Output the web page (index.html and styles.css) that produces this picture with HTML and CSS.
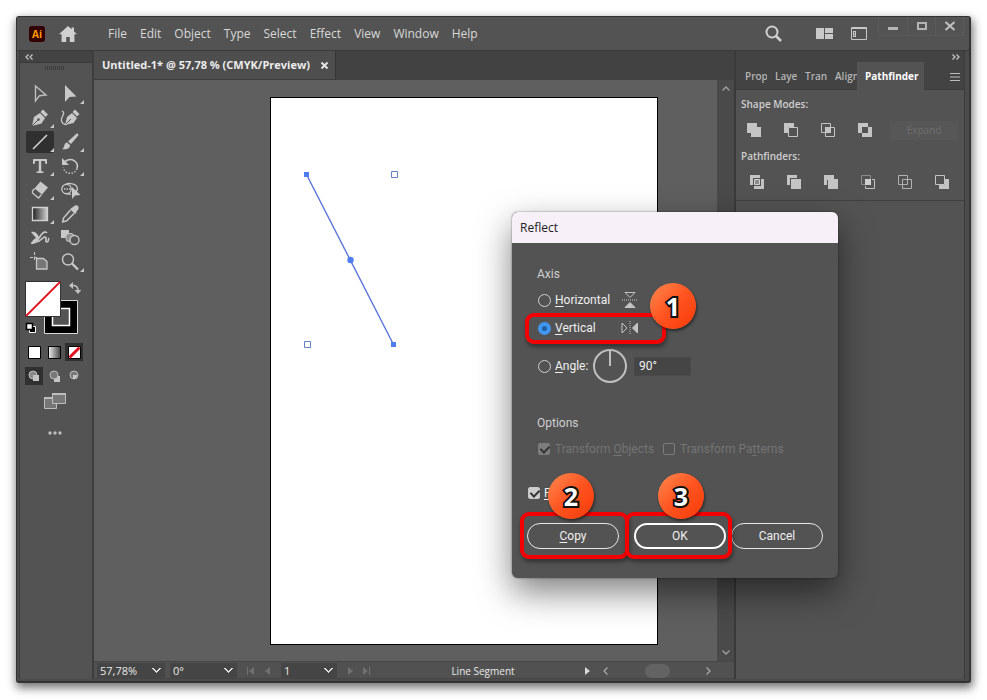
FILE: index.html
```html
<!DOCTYPE html>
<html lang="en">
<head>
<meta charset="utf-8">
<title>Untitled-1* – Reflect</title>
<link rel="stylesheet" href="styles.css">
</head>
<body>
<main class="app">
  <header class="menubar">
    <span class="logo">Ai</span>
    <button class="icon-btn home" aria-label="Home"><svg width="18" height="16" viewBox="0 0 18 16"><path fill="#d0d0d0" d="M9 0L0 8.3h2.6V16h4.6v-5h3.6v5h4.6V8.3H18L15 5.5V1.500h-2.400v1.800z"/></svg></button>
    <nav class="menus">
      <a href="#">File</a><a href="#">Edit</a><a href="#">Object</a><a href="#">Type</a><a href="#">Select</a><a href="#">Effect</a><a href="#">View</a><a href="#">Window</a><a href="#">Help</a>
    </nav>
    <div class="bar-tools">
      <button class="icon-btn" aria-label="Search"><svg width="17" height="17" viewBox="0 0 17 17" fill="none" stroke="#cfcfcf"><circle cx="7" cy="7" r="5.500" stroke-width="2"/><path d="M11 11l5 5" stroke-width="2.600"/></svg></button>
      <button class="icon-btn layout" aria-label="Arrange documents"><svg width="17" height="11" viewBox="0 0 17 11" fill="#c8c8c8"><path d="M0 0h8v11H0zM9 0h8v5H9zM9 6h8v5H9z"/></svg></button>
      <button class="icon-btn" aria-label="Workspace"><svg width="16" height="13" viewBox="0 0 16 13" fill="none" stroke="#c8c8c8"><path d="M.5.5h15v12H.5zM0 1.500h16"/><path d="M2.500 4v6M4.500 4v6M2 4.500h3M2 7h3M2 9.500h3"/></svg></button>
    </div>
    <div class="win-ctrls">
      <button aria-label="Minimize"><svg width="12" height="12" viewBox="0 0 12 12"><path fill="#b4b4b4" d="M1 7h10v3H1z"/></svg></button>
      <button aria-label="Maximize"><svg width="12" height="12" viewBox="0 0 12 12"><path fill="none" stroke="#b4b4b4" stroke-width="2" d="M2 3h8v6H2z"/></svg></button>
      <button aria-label="Close"><svg width="12" height="12" viewBox="0 0 12 12"><path fill="none" stroke="#c0c0c0" stroke-width="2" d="M1.500 2l9 8M10.500 2l-9 8"/></svg></button>
    </div>
  </header>

  <div class="workspace">
    <aside class="toolbar">
      <div class="dock-head"><svg width="8" height="6" viewBox="0 0 8 6" fill="none" stroke="#c4c4c4" stroke-width="1.300"><path d="M3.500.5L1 3l2.500 2.500M7.500.5L5 3l2.500 2.500"/></svg></div>
      <div class="grip"></div>
      <div class="tools">
        <button class="tool" aria-label="Selection"><svg width="28" height="22" viewBox="0 0 28 22"><path fill="none" stroke="#bfbfbf" stroke-width="1.400" d="M9.500 3v15l4-5.300L20 12z"/></svg></button>
        <button class="tool more" aria-label="Direct selection"><svg width="28" height="22" viewBox="0 0 28 22"><path fill="#c8c8c8" d="M9 2v17l4.500-5 7-.5z"/></svg></button>
        <button class="tool more" aria-label="Pen"><svg width="28" height="22" viewBox="0 0 28 22"><path fill="#c8c8c8" d="M6 19l2-9 6-4 5 5-3.500 5.500z"/><path fill="#c8c8c8" d="M14.500 5L17 2.500l5 5L19.500 10z"/><path stroke="#535353" d="M6 19l6-6"/><circle cx="12.500" cy="12.500" r="1.300" fill="#535353"/></svg></button>
        <button class="tool" aria-label="Curvature"><svg width="28" height="22" viewBox="0 0 28 22"><path fill="#c8c8c8" d="M9 18l2-8 5-4 5 5-3.500 5zM16.500 5L19 2.500l4.500 4.500L21 9.500z"/><path stroke="#535353" d="M9 18l6-6"/><path fill="none" stroke="#c8c8c8" stroke-width="1.300" d="M6 4c5 2-3 7 0 11 1 2 3 3 5 2"/></svg></button>
        <button class="tool more on" aria-label="Line segment"><svg width="28" height="22" viewBox="0 0 28 22"><path stroke="#d0d0d0" stroke-width="1.600" d="M7 18L21 4"/></svg></button>
        <button class="tool more" aria-label="Paintbrush"><svg width="28" height="22" viewBox="0 0 28 22"><path fill="#c8c8c8" d="M22 3c1 1 0 2-1 3l-6 7-3-2.500 7-6.500c1-1 2-2 3-1zM11 11.500l3 2.500c0 4-4 5-8 4 3-1 1.500-6 5-6.500z"/></svg></button>
        <button class="tool more" aria-label="Type"><svg width="28" height="22" viewBox="0 0 28 22"><path fill="#c8c8c8" d="M7 4h14v5h-1.500l-.8-3h-3.500v10l2.300.7V18h-7v-1.300l2.300-.7V6H9.300l-.8 3H7z"/></svg></button>
        <button class="tool more" aria-label="Rotate"><svg width="28" height="22" viewBox="0 0 28 22"><path fill="none" stroke="#c8c8c8" stroke-width="1.600" d="M9 6.500c7-5 14 1 12 7"/><path fill="none" stroke="#c8c8c8" stroke-width="1.400" stroke-dasharray="1.500 1.500" d="M21 13.500c-2 7-13 6-13.500-1"/><path fill="#c8c8c8" d="M6 3v7h7z"/></svg></button>
        <button class="tool more" aria-label="Eraser"><svg width="28" height="22" viewBox="0 0 28 22"><path fill="#c8c8c8" d="M14.500 2.500l7.500 6-6 7-7.500-6z"/><path fill="none" stroke="#c8c8c8" stroke-width="1.300" d="M8.500 9.500L6.500 12v2l6 5 3-3.500"/></svg></button>
        <button class="tool" aria-label="Shape builder"><svg width="28" height="22" viewBox="0 0 28 22"><g fill="none" stroke="#c8c8c8" stroke-width="1.300"><circle cx="10.500" cy="10" r="4.700"/><path d="M9 5.500c3-1.500 9-1.500 11.500 1.500 2 3 .5 5-1.500 6.500M9 14.500c2 .8 4 .8 6 .5"/><path stroke-dasharray="1.500 1" d="M8 10h9"/></g><path fill="#c8c8c8" d="M16 8v12l3-3.500 5.500-.5z"/></svg></button>
        <button class="tool more" aria-label="Gradient"><svg width="28" height="22" viewBox="0 0 28 22"><defs><linearGradient id="g1"><stop stop-color="#222"/><stop offset="1" stop-color="#d0d0d0"/></linearGradient></defs><path fill="url(#g1)" stroke="#d0d0d0" stroke-width="1.300" d="M6.500 4.500h15v13h-15z"/></svg></button>
        <button class="tool" aria-label="Eyedropper"><svg width="28" height="22" viewBox="0 0 28 22"><path fill="#c8c8c8" d="M17 4c2-2 4-2 5-1s1 3-1 5l-1 1 .5 1-1.500 1-5-5 1.500-1z"/><path fill="none" stroke="#c8c8c8" stroke-width="1.500" d="M14.500 7l-7 8-.8 4 4-1.200L18 10.500"/></svg></button>
        <button class="tool" aria-label="Puppet warp"><svg width="28" height="22" viewBox="0 0 28 22"><path fill="#c8c8c8" d="M5 5c4-1 6 1 8 5l-2 4-6 3 2-4 3-2z"/><path fill="none" stroke="#c8c8c8" stroke-width="1.600" d="M5 16c6 1 7-4 10-8 2-3 5-4 6-2M10 15c5 0 6-5 9-5 3 1-1 5 2 5 2 0 1-3 2-4"/></svg></button>
        <button class="tool" aria-label="Blend"><svg width="28" height="22" viewBox="0 0 28 22"><path fill="#c8c8c8" d="M5 3h8v3l-4 5H5z"/><rect x="10" y="6.500" width="8" height="8" rx="3" fill="#8c8c8c" stroke="#c8c8c8"/><circle cx="18.500" cy="13" r="4.500" fill="#535353" stroke="#c8c8c8" stroke-width="1.300"/></svg></button>
        <button class="tool" aria-label="Artboard"><svg width="28" height="22" viewBox="0 0 28 22"><path fill="#777" stroke="#c8c8c8" stroke-width="1.300" d="M10.500 7.500h7l3.500 3V18H10.500z"/><path stroke="#c8c8c8" d="M8.500 1v3m0 1.500V9M4 6.500h3m1 0h3"/></svg></button>
        <button class="tool more" aria-label="Zoom"><svg width="28" height="22" viewBox="0 0 28 22" fill="none" stroke="#c8c8c8"><circle cx="12" cy="8.500" r="5.500" stroke-width="1.400"/><path stroke-width="2.400" d="M16 12.500l6 6"/></svg></button>
      </div>
      <button class="icon-btn fill-stroke" aria-label="Fill and stroke"><svg width="56" height="54" viewBox="0 0 56 54">
        <path fill="#000" stroke="#d8d8d8" d="M19.500 19.500h33v33h-33z"/><path fill="#535353" stroke="#fff" stroke-width="1.500" d="M27.500 27.500h17v17h-17z"/>
        <path fill="#fff" stroke="#333" d="M.5.5h35v35H.5z"/><path stroke="#e11422" stroke-width="1.800" d="M1 35L35 1"/>
        <path fill="none" stroke="#bfbfbf" stroke-width="1.600" d="M47 4.500h1c4 0 5 2 5 5"/><path fill="#bfbfbf" d="M44 4.500L48 1v7zM49.500 9h7L53 13z"/>
        <path fill="#000" stroke="#fff" d="M4.500 45.500h6v6h-6z"/><path fill="#fff" stroke="#000" stroke-width="1.500" d="M1.500 42.500h6v6h-6z"/>
      </svg></button>
      <div class="paint">
        <button class="swatch" aria-label="Color"><svg width="18" height="18"><path fill="#fff" stroke="#000" d="M3.500 3.500h12v12h-12z"/></svg></button>
        <button class="swatch" aria-label="Gradient fill"><svg width="18" height="18"><defs><linearGradient id="g2"><stop stop-color="#eee"/><stop offset="1" stop-color="#444"/></linearGradient></defs><path fill="url(#g2)" stroke="#000" d="M3.500 3.500h12v12h-12z"/></svg></button>
        <button class="swatch on" aria-label="None"><svg width="18" height="18"><path fill="#fff" stroke="#000" d="M3.500 3.500h12v12h-12z"/><path stroke="#e11422" stroke-width="3" d="M4.500 14.500l10-10"/></svg></button>
      </div>
      <div class="paint modes">
        <button class="swatch on" aria-label="Draw normal"><svg width="18" height="18"><circle cx="8" cy="8" r="4" fill="#888" stroke="#bbb"/><path fill="#c4c4c4" d="M8 8h6v6H8z"/></svg></button>
        <button class="swatch" aria-label="Draw behind"><svg width="18" height="18"><path fill="#c4c4c4" d="M9 9h6v6H9z"/><circle cx="9" cy="8" r="4" fill="#777" stroke="#bbb"/></svg></button>
        <button class="swatch" aria-label="Draw inside"><svg width="18" height="18"><circle cx="9" cy="8" r="4" fill="#777" stroke="#bbb"/><path fill="#c4c4c4" d="M8 8h4.500l-2 4H8z"/></svg></button>
      </div>
      <button class="icon-btn screen" aria-label="Screen mode"><svg width="22" height="16" viewBox="0 0 22 16" fill="#777" stroke="#bdbdbd"><path d="M.5 4.500h12v11H.5z"/><path fill="#bdbdbd" d="M.5 4.500h12v1H.5z"/><path d="M8.500.5h13v10h-13z"/><path fill="#bdbdbd" d="M8.500.5h13v1h-13z"/></svg></button>
      <button class="icon-btn dots" aria-label="Edit toolbar"><svg width="14" height="4" fill="#bdbdbd"><circle cx="2" cy="2" r="1.700"/><circle cx="7" cy="2" r="1.700"/><circle cx="12" cy="2" r="1.700"/></svg></button>
    </aside>

    <section class="document">
      <div class="tabs"><div class="doc-tab"><span>Untitled-1* @ 57,78 % (CMYK/Preview)</span><button class="icon-btn" aria-label="Close document"><svg width="7" height="7" viewBox="0 0 7 7" stroke="#e4e4e4" stroke-width="2"><path d="M.5.5l6 6M6.500.5l-6 6"/></svg></button></div></div>
      <div class="stage">
        <div class="canvas">
          <div class="artboard">
            <svg class="drawing" width="140" height="260" viewBox="0 0 140 260">
              <path stroke="#5a74d8" stroke-width="1.400" d="M35.500 76.500l87 170"/>
              <path fill="#4f7df0" d="M33 74h5v5h-5zM120 244h5v5h-5z"/><circle cx="79.500" cy="162" r="3.200" fill="#4f7df0"/>
              <path fill="#fff" stroke="#6481c4" d="M120.500 73.500h6v6h-6zM33.500 243.500h6v6h-6z"/>
            </svg>
          </div>
        </div>
        <div class="vscroll">
          <svg width="8" height="5" viewBox="0 0 8 5" fill="none" stroke="#a0a0a0" stroke-width="1.300"><path d="M.5 4.500L4 1l3.500 3.500"/></svg>
          <svg width="8" height="5" viewBox="0 0 8 5" fill="none" stroke="#a0a0a0" stroke-width="1.300"><path d="M.5.5L4 4 7.500.5"/></svg>
        </div>
      </div>
      <footer class="status">
        <select class="zoom-level" aria-label="Zoom level"><option>57,78%</option></select>
        <select class="rotation" aria-label="Rotation"><option>0°</option></select>
        <span class="pager"><svg width="28" height="8" viewBox="0 0 28 8" fill="#707070"><path d="M2 0h1v8H2zM9 0v8L4 4zM25 0v8l-5-4z"/></svg></span>
        <select class="board" aria-label="Artboard number"><option>1</option></select>
        <span class="pager"><svg width="28" height="8" viewBox="0 0 28 8" fill="#707070"><path d="M3 0v8l5-4zM18 0v8l5-4zM24 0h1v8h-1z"/></svg></span>
        <span class="tool-name">Line Segment</span>
        <svg width="6" height="8" viewBox="0 0 6 8" fill="#d8d8d8"><path d="M0 0v8l5-4z"/></svg>
        <div class="hscroll">
          <svg width="5" height="8" viewBox="0 0 5 8" fill="none" stroke="#a8a8a8" stroke-width="1.300"><path d="M4.500.5L1 4l3.500 3.500"/></svg>
          <span class="thumb"></span>
          <svg width="5" height="8" viewBox="0 0 5 8" fill="none" stroke="#a8a8a8" stroke-width="1.300"><path d="M.5.5L4 4 .5 7.500"/></svg>
        </div>
      </footer>
    </section>

    <aside class="panel">
      <div class="panel-head"><svg width="8" height="6" viewBox="0 0 8 6" fill="none" stroke="#c4c4c4" stroke-width="1.300"><path d="M.5.5L3 3 .5 5.500M4.500.5L7 3 4.500 5.500"/></svg></div>
      <div class="panel-tabs">
        <button>Prop</button><button>Laye</button><button>Tran</button><button>Align</button><button class="active">Pathfinder</button>
        <svg class="burger" width="10" height="8" viewBox="0 0 10 8" stroke="#bdbdbd"><path d="M0 .5h10M0 4h10M0 7.500h10"/></svg>
      </div>
      <div class="panel-body">
        <h2>Shape Modes:</h2>
        <div class="ops shape-ops">
          <button aria-label="Unite"><svg width="14" height="14" fill="#c4c4c4"><path d="M0 0h10v4h4v10H4v-4H0z"/></svg></button>
          <button aria-label="Minus front"><svg width="14" height="14" fill="#c4c4c4"><path d="M0 0h10v4H4v6H0z"/><path fill="#535353" stroke="#c4c4c4" d="M4.500 4.500h9v9h-9z"/></svg></button>
          <button aria-label="Intersect"><svg width="14" height="14" fill="none" stroke="#c4c4c4"><path d="M.5.500h9v9h-9zM4.500 4.500h9v9h-9z"/><path fill="#c4c4c4" stroke="none" d="M4 4h6v6H4z"/></svg></button>
          <button aria-label="Exclude"><svg width="14" height="14" fill="#c4c4c4"><path fill-rule="evenodd" d="M0 0h10v4h4v10H4v-4H0zM4 4v6h6V4z"/></svg></button>
          <button class="expand" disabled>Expand</button>
        </div>
        <h2>Pathfinders:</h2>
        <div class="ops path-ops">
          <button aria-label="Divide"><svg width="14" height="14" fill="#c4c4c4"><path d="M0 0h10v3H3v7H0zM11 4h3v10H4v-3h7z"/><path fill="#8c8c8c" stroke="#d0d0d0" d="M4.500 4.500h5v5h-5z"/></svg></button>
          <button aria-label="Trim"><svg width="14" height="14" fill="#c4c4c4"><path d="M0 0h10v3H3v7H0zM4 4h10v10H4z"/></svg></button>
          <button aria-label="Merge"><svg width="14" height="14" fill="#c4c4c4"><path d="M0 0h10v4h4v10H4v-4H0z"/><path stroke="#535353" fill="none" d="M3.500 10V5"/></svg></button>
          <button aria-label="Crop"><svg width="14" height="14" fill="none" stroke="#8c8c8c"><path d="M.5.500h9v9h-9z"/><path stroke="#c4c4c4" d="M11 4.500h2.500v9h-9V11"/><path fill="#d0d0d0" stroke="none" d="M4 4h6v6H4z"/></svg></button>
          <button aria-label="Outline"><svg width="14" height="14" fill="none" stroke="#b0b0b0"><path d="M.5.500h9v9h-9zM4.500 4.500h9v9h-9z"/></svg></button>
          <button aria-label="Minus back"><svg width="14" height="14" fill="#c4c4c4"><path d="M10 4h4v10H4v-4h6z"/><path fill="none" stroke="#c4c4c4" d="M.5.500h9v9h-9z"/></svg></button>
        </div>
      </div>
    </aside>
  </div>

  <form class="dialog" role="dialog" aria-label="Reflect">
    <h1>Reflect</h1>
    <div class="dialog-body">
      <h2>Axis</h2>
      <div class="row"><input type="radio" name="axis" id="ax-h"><label for="ax-h"><u>H</u>orizontal</label>
        <svg class="axis-icon" width="18" height="18" viewBox="0 0 18 18" fill="none" stroke="#c4c4c4"><path d="M4 1.500h10L9 6.500z"/><path stroke-dasharray="1 1" d="M1 9h16"/><path fill="#c4c4c4" d="M9 11.500l5 5H4z"/></svg></div>
      <div class="row"><input type="radio" name="axis" id="ax-v" checked><label for="ax-v"><u>V</u>ertical</label>
        <svg class="axis-icon" width="18" height="18" viewBox="0 0 18 18" fill="none" stroke="#c4c4c4"><path d="M1 4v10l5-5z"/><path stroke-dasharray="1 1" d="M9 2v14"/><path fill="#c4c4c4" d="M16.500 4v10l-5-5z"/></svg></div>
      <div class="row angle"><input type="radio" name="axis" id="ax-a"><label for="ax-a"><u>A</u>ngle:</label>
        <svg width="36" height="36" viewBox="0 0 36 36" fill="none" stroke="#c0c0c0" stroke-width="2"><circle cx="18" cy="18" r="16"/><path d="M18 2v16"/></svg>
        <input type="text" value="90°" aria-label="Angle value"></div>
      <h2 class="options">Options</h2>
      <div class="row checks">
        <input type="checkbox" id="t-o" checked disabled><label for="t-o">Transform <u>O</u>bjects</label>
        <input type="checkbox" id="t-p" disabled><label for="t-p">Transform Pa<u>t</u>terns</label></div>
      <div class="row preview"><input type="checkbox" id="prev" checked><label for="prev"><u>P</u></label></div>
      <div class="actions"><button type="button"><u>C</u>opy</button><button type="button" class="primary">OK</button><button type="button" class="cancel">Cancel</button></div>
    </div>
    <span class="mark mark-vertical"></span><span class="mark mark-copy"></span><span class="mark mark-ok"></span>
    <b class="badge badge-1">1</b><b class="badge badge-2">2</b><b class="badge badge-3">3</b>
  </form>
</main>
</body>
</html>
```
FILE: styles.css
```css
* { box-sizing: border-box; }
body {
  margin: 0;
  padding: 16px;
  min-height: 100vh;
  background: #fff;
  color: #d8d8d8;
  font: 12px/16px "Open Sans", "Noto Sans", sans-serif;
}
button, input, select { font: inherit; color: inherit; }
button { padding: 0; border: 0; background: none; }
svg { display: block; flex: none; }
h1, h2 { margin: 0; font-size: 12px; font-weight: 400; }
a { color: inherit; text-decoration: none; }

.app {
  position: relative;
  display: flex;
  flex-direction: column;
  min-height: calc(100vh - 33px);
  padding-bottom: 2px;
  border: 1px solid #333;
  border-right-width: 2px;
  border-bottom-width: 2px;
  border-radius: 3px;
  background: #4b4b4b;
  box-shadow: 1px 4px 10px 1px rgba(0, 0, 0, .55);
}

/* Menu bar */
.menubar {
  display: flex;
  align-items: center;
  height: 34px;
  padding-left: 12px;
  background: #535353;
  border-bottom: 1px solid #3a3a3a;
}
.logo {
  width: 16px;
  height: 16px;
  border-radius: 3px;
  background: #330000;
  color: #ff9a00;
  font-size: 10px;
  font-weight: 700;
  text-align: center;
}
.icon-btn { display: flex; align-items: center; justify-content: center; }
.home { margin-left: 14px; }
.menus { display: flex; gap: 13px; margin-left: 31px; flex: 1; }
.bar-tools { display: flex; align-items: center; gap: 18px; }
.layout { margin-left: 16px; }
.win-ctrls { display: flex; align-self: flex-start; margin: 0 5px 0 11px; border: 1px solid #5a5a5a; border-top: 0; }
.win-ctrls button { display: flex; align-items: center; justify-content: center; width: 28px; height: 18px; }
.win-ctrls button + button { border-left: 1px solid #5a5a5a; }

.workspace { display: flex; flex: 1; padding: 0 4px 0 2px; }

/* Tools */
.toolbar {
  display: flex;
  flex-direction: column;
  width: 75px;
  background: #535353;
  border-left: 1px solid #3c3c3c;
  border-right: 2px solid #3e3e3e;
}
.dock-head { height: 12px; padding: 3px 5px; background: #434343; border-bottom: 1px solid #3a3a3a; }
.grip {
  width: 20px;
  height: 4px;
  margin: 3px auto 13px 25px;
  background: repeating-linear-gradient(90deg, #3c3c3c 0 1px, #535353 1px 2px);
}
.tools { display: grid; grid-template-columns: 30px 30px; grid-auto-rows: 24px; margin-left: 6px; }
.tool { position: relative; width: 28px; height: 22px; border-radius: 2px; }
.on { background: #303030; }
.more::after {
  content: "";
  position: absolute;
  right: 0;
  bottom: 1px;
  border: 2px solid transparent;
  border-right-color: #c8c8c8;
  border-bottom-color: #c8c8c8;
}
.fill-stroke { width: 56px; margin: 6px 0 0 5px; }
.paint { display: flex; gap: 2px; margin: 8px 0 0 5px; }
.swatch { width: 18px; height: 18px; }
.modes { margin-top: 6px; }
.screen { width: 22px; margin: 8px 0 0 24px; }
.dots { width: 14px; margin: 22px 0 0 28px; }

/* Document */
.document { display: flex; flex-direction: column; flex: 1; min-width: 0; }
.tabs { display: flex; height: 29px; background: #424242; }
.doc-tab {
  display: flex;
  align-items: center;
  gap: 11px;
  padding: 0 7px 0 8px;
  background: #4e4e4e;
  border-right: 1px solid #363636;
  border-bottom: 1px solid #3c3c3c;
  color: #ececec;
  font-size: 11px;
  font-weight: 700;
  white-space: nowrap;
}
.stage { display: flex; flex: 1; }
.canvas { display: flex; flex: 1; padding: 17px 59px 16px 176px; background: #5f5f5f; }
.artboard { flex: 1; background: #fff; border: 1px solid #000; }
.vscroll {
  display: flex;
  flex-direction: column;
  justify-content: space-between;
  align-items: center;
  width: 17px;
  padding: 6px 0;
  background: #4a4a4a;
}
.status {
  display: flex;
  align-items: center;
  height: 18px;
  padding: 1px 3px 0;
  background: #515151;
  border-top: 1px solid #464646;
  border-bottom: 1px solid #464646;
  color: #e8e8e8;
  font-size: 11px;
}
.status select {
  appearance: none;
  height: 16px;
  padding: 0 3px;
  border: 0;
  border-radius: 0;
  outline: 0;
  background:
    linear-gradient(45deg, transparent 42%, #e0e0e0 43% 60%, transparent 61%) right 8px center / 5px 5px no-repeat,
    linear-gradient(-45deg, transparent 42%, #e0e0e0 43% 60%, transparent 61%) right 4px center / 5px 5px no-repeat,
    #454545;
  line-height: 16px;
}
.zoom-level { width: 68px; }
.rotation { width: 67px; margin-left: 5px; }
.board { width: 56px; }
.pager { width: 44px; padding: 0 8px; }
.tool-name { flex: 1; text-align: center; font-size: 10px; }
.hscroll { display: flex; justify-content: space-between; align-items: center; width: 108px; margin: 0 20px 0 12px; }
.thumb { width: 25px; height: 14px; border-radius: 7px; background: #636363; }

/* Panel */
.panel { width: 231px; background: #535353; border: solid #3a3a3a; border-width: 0 1px 0 2px; font-size: 10px; }
.panel-head { display: flex; justify-content: flex-end; height: 11px; padding: 3px 4px 0; background: #434343; }
.panel-tabs { display: flex; align-items: stretch; height: 28px; padding-left: 1px; background: #434343; border-bottom: 1px solid #3c3c3c; color: #b4b4b4; font-weight: 600; }
.panel-tabs button { width: 30px; overflow: hidden; padding-left: 8px; text-align: left; white-space: nowrap; }
.panel-tabs .active { width: 67px; height: 28px; color: #fff; font-weight: 700; background: #535353; }
.burger { margin: 11px 4px 0 auto; }
.panel-body { padding: 6px 5px 8px; border-bottom: 1px solid #404040; }
.panel-body h2 { font-size: 10px; font-weight: 600; color: #cfcfcf; }
.ops { display: flex; align-items: center; height: 20px; }
.ops button { flex: none; }
.shape-ops { gap: 23px; margin: 8px 0; padding-left: 6px; }
.path-ops { gap: 23px; margin-top: 8px; padding-left: 9px; }
.ops .expand { width: 68px; height: 19px; margin-left: -5px; background: #575757; color: #6e6e6e; }

/* Reflect dialog */
.dialog {
  position: absolute;
  left: 495px;
  top: 195px;
  width: 326px;
  border-radius: 6px;
  background: #535353;
  box-shadow: 0 0 2px rgba(0, 0, 0, .5), 0 14px 34px rgba(0, 0, 0, .5);
  color: #f0f0f0;
}
.dialog h1 { padding: 8px 8px 7px; border-radius: 6px 6px 0 0; background: #f8f0f8; color: #1c1c1c; }
.dialog-body { padding: 23px 14px 29px 25px; font-family: Roboto, "Noto Sans", sans-serif; }
.dialog h2 { color: #cfcfcf; }
.row { display: flex; align-items: center; height: 28px; }
.dialog h2 + .row { margin-top: 4px; }
.row label { min-width: 56px; margin-left: 4px; }
u { text-underline-offset: 2px; }
.dialog input[type="radio"], .dialog input[type="checkbox"] { appearance: none; flex: none; margin: 0; }
.dialog input[type="radio"] { width: 13px; height: 13px; margin-left: 1px; border: 1px solid #d0d0d0; border-radius: 50%; }
.dialog input[type="radio"]:checked { border: 4px solid #4096f0; background: #1f5f9f; }
.dialog input[type="checkbox"] { width: 12px; height: 12px; border: 1px solid #c8c8c8; border-radius: 2px; }
.dialog input[type="checkbox"]:checked { background: #cdcdcd; }
.dialog input[type="checkbox"]:checked::after {
  content: "";
  display: block;
  width: 4px;
  height: 7px;
  margin: 0 3px;
  border: solid #333;
  border-width: 0 2px 2px 0;
  transform: rotate(45deg);
}
.dialog input[type="checkbox"]:disabled { border-color: #7c7c7c; }
.dialog input[type="checkbox"]:checked:disabled { background: #7c7c7c; }
.axis-icon { margin-left: 10px; }
.angle { height: 36px; margin-top: 6px; }
.angle label { min-width: 34px; }
.angle svg { margin-left: 3px; }
.angle input[type="text"] { width: 57px; height: 19px; margin-left: 6px; padding: 0 4px; border: 1px solid #4a4a4a; background: #454545; }
.options { padding-top: 31px; }
.checks { gap: 1px; padding-left: 1px; color: #747474; }
.checks label { min-width: 107px; }
.preview { margin: 16px 0 0 -9px; }
.actions { display: flex; align-items: center; margin: 16px 0 0 -10px; }
.actions button { width: 92px; height: 26px; border: 1px solid #e8e8e8; border-radius: 13px; }
.actions .primary { margin-left: 15px; border: 2px solid #fff; }
.actions .cancel { margin-left: 5px; }

/* Step annotations */
.mark { position: absolute; border: 4px solid #f40000; border-radius: 9px; box-shadow: 1px 3px 4px rgba(0, 0, 0, .4); pointer-events: none; }
.mark-vertical { left: 13px; top: 101px; width: 141px; height: 31px; }
.mark-copy { left: 8px; top: 300px; width: 109px; height: 47px; }
.mark-ok { left: 113px; top: 300px; width: 107px; height: 47px; }
.badge {
  position: absolute;
  width: 46px;
  height: 46px;
  border-radius: 50%;
  background: linear-gradient(135deg, #ff8a50, #ff5420 50%, #f83a08);
  box-shadow: 1px 2px 3px rgba(0, 0, 0, .5);
  color: #fff;
  font: 700 25px/46px "Noto Sans", "Open Sans", sans-serif;
  text-align: center;
  -webkit-text-stroke: 4px #111;
  paint-order: stroke fill;
}
.badge-1 { left: 138px; top: 71px; }
.badge-2 { left: 36px; top: 261px; }
.badge-3 { left: 146px; top: 261px; }
```
